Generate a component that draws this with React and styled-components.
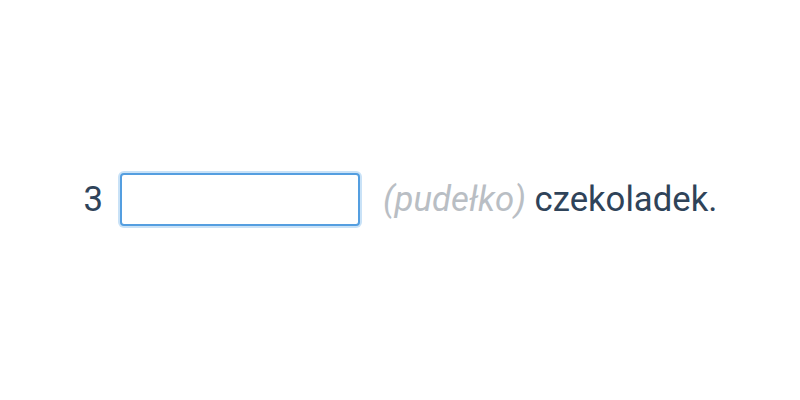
import { createGlobalStyle, styled } from 'styled-components';

const GlobalStyle = createGlobalStyle`
  html, body {
    margin: 0;
    padding: 0;
    background: #ffffff;
  }
  body {
    font-family: Roboto, "Liberation Sans", sans-serif;
  }
`;

function App() {
  return (
    <>
      <GlobalStyle />
      <Page>
        <Sentence>
          <Number>3</Number>
          <Field type="text" />
          <Tail>
            <Hint>(pudełko)</Hint> czekoladek.
          </Tail>
        </Sentence>
      </Page>
    </>
  );
}

const Page = styled.div`
  display: flex;
  justify-content: center;
  align-items: center;
  height: 400px;
`;

const Sentence = styled.div`
  display: flex;
  align-items: center;
  font-size: 34.7px;
  color: #2f4359;
  margin-top: -2px;
  margin-left: 1px;
`;

const Number = styled.span`
  margin-right: 17px;
`;

const Field = styled.input`
  box-sizing: border-box;
  width: 240px;
  height: 53px;
  border: 2px solid #549ee0;
  border-radius: 4px;
  box-shadow: 0 0 0 2px #c9e2f7;
  outline: none;
  font-size: 29px;
  font-family: inherit;
  margin-right: 23px;
`;

const Tail = styled.span`
  white-space: nowrap;
`;

const Hint = styled.span`
  font-style: italic;
  color: #b9bec4;
`;

export default App;
